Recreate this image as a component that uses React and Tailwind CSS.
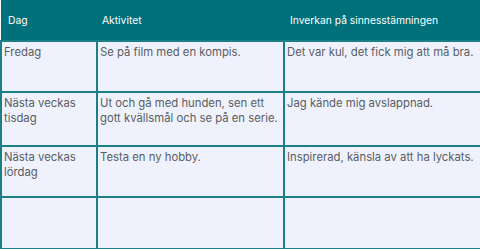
export default function App() {
  const rows = [
    ["Fredag", "Se på film med en kompis.", "Det var kul, det fick mig att må bra."],
    ["Nästa veckas tisdag", "Ut och gå med hunden, sen ett gott kvällsmål och se på en serie.", "Jag kände mig avslappnad."],
    ["Nästa veckas lördag", "Testa en ny hobby.", "Inspirerad, känsla av att ha lyckats."],
    ["", "", ""],
  ];
  const heights = ["h-[51px]", "h-[54px]", "h-[51px]", "h-[52px]"];

  return (
    <div className="w-[480px] h-[249px] bg-white overflow-hidden" style={{ fontFamily: "Inter, 'Noto Sans', sans-serif" }}>
      <table className="w-[480px] table-fixed border-collapse">
        <colgroup>
          <col className="w-[96px]" />
          <col className="w-[187px]" />
          <col className="w-[197px]" />
        </colgroup>
        <thead>
          <tr className="h-[41px] bg-[#00707a] text-white text-[10.3px]">
            <th className="text-left font-normal px-[7px] pt-[1px]">Dag</th>
            <th className="text-left font-normal px-[5px] pt-[1px]">Aktivitet</th>
            <th className="text-left font-normal px-[6px] pt-[1px]">Inverkan på sinnesstämningen</th>
          </tr>
        </thead>
        <tbody>
          {rows.map((r, i) => (
            <tr key={i} className={heights[i]}>
              {r.map((c, j) => (
                <td
                  key={j}
                  className="align-top border-2 border-[#1a7f87] bg-[#eff2fd] text-[#595d64] text-[11.3px] leading-[15px] pl-[2px] pr-0 pt-[3px]"
                >
                  {c}
                </td>
              ))}
            </tr>
          ))}
        </tbody>
      </table>
    </div>
  );
}
